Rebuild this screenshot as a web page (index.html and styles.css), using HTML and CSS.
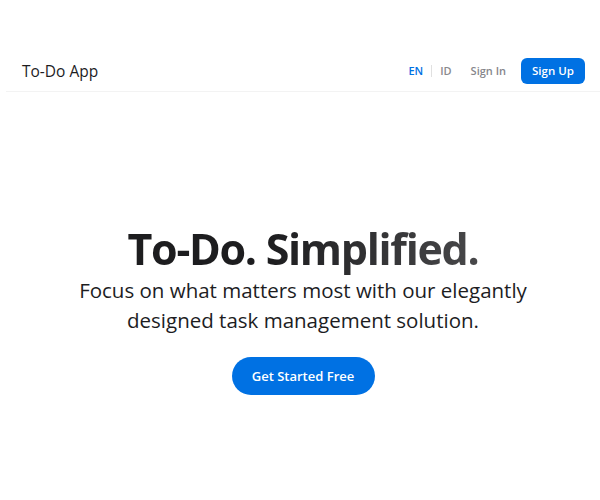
FILE: index.html
```html
<!DOCTYPE html>
<html lang="en">
<head>
<meta charset="utf-8">
<title>To-Do App</title>
<link rel="stylesheet" href="styles.css">
</head>
<body>
<header class="topbar">
  <div class="brand">To-Do App</div>
  <nav class="nav">
    <div class="lang">
      <span class="lang-item active">EN</span>
      <span class="lang-sep"></span>
      <span class="lang-item">ID</span>
    </div>
    <a class="signin" href="#">Sign In</a>
    <a class="signup" href="#">Sign Up</a>
  </nav>
</header>
<main class="hero">
  <h1 class="title">To-Do. Simplified.</h1>
  <p class="subtitle">Focus on what matters most with our elegantly designed task management solution.</p>
  <a class="cta" href="#">Get Started Free</a>
</main>
</body>
</html>
```
FILE: styles.css
```css
* { box-sizing: border-box; }
html, body { margin: 0; padding: 0; background: #fff; }
body {
  font-family: "Open Sans", "Noto Sans", sans-serif;
  color: #1d1d1f;
  padding-top: 50px;
}
.topbar {
  margin: 0 0 0 6px;
  height: 42px;
  display: flex;
  align-items: center;
  justify-content: space-between;
  padding: 0 15px 0 16px;
  border-bottom: 1px solid #f3f3f3;
}
.brand {
  font-size: 15.5px;
  color: #1d1d1f;
  font-weight: 400;
}
.nav {
  display: flex;
  align-items: center;
}
.lang {
  display: flex;
  align-items: center;
  gap: 8px;
  margin-right: 19px;
}
.lang-item {
  font-size: 11px;
  font-weight: 600;
  color: #8a8a8e;
}
.lang-item.active { color: #0071e3; }
.lang-sep {
  width: 1px;
  height: 12px;
  background: #e0e0e0;
}
.signin {
  font-size: 11px;
  font-weight: 600;
  color: #86868b;
  text-decoration: none;
  margin-right: 15px;
}
.signup {
  display: flex;
  align-items: center;
  justify-content: center;
  width: 64px;
  height: 26px;
  border-radius: 6px;
  background: #0071e3;
  color: #fff;
  font-size: 11.5px;
  font-weight: 600;
  text-decoration: none;
}
.hero {
  display: flex;
  flex-direction: column;
  align-items: center;
  text-align: center;
  padding-top: 131px;
  padding-left: 6px;
}
.title {
  margin: 0;
  font-size: 43px;
  font-weight: 700;
  line-height: 52px;
  letter-spacing: -1.3px;
  background: linear-gradient(90deg, #1d1d1f 40%, #48484a 100%);
  -webkit-background-clip: text;
  background-clip: text;
  color: transparent;
}
.subtitle {
  margin: 0;
  width: 460px;
  font-size: 20.5px;
  line-height: 30px;
  color: #1d1d1f;
}
.cta {
  margin-top: 22px;
  display: flex;
  align-items: center;
  justify-content: center;
  width: 143px;
  height: 38px;
  border-radius: 19px;
  background: #0071e3;
  color: #fff;
  font-size: 13px;
  font-weight: 600;
  text-decoration: none;
}
```
